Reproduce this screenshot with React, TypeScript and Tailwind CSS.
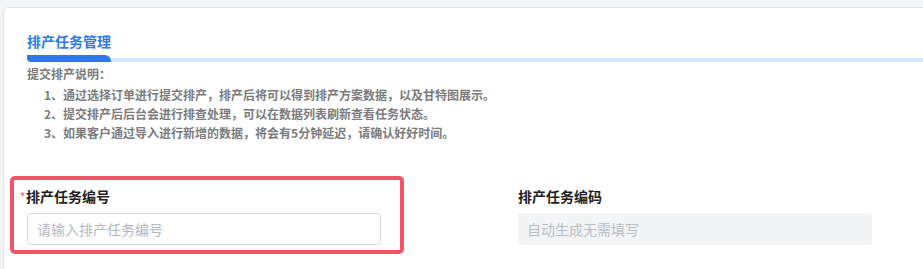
import React from "react";

const notes = [
  "1、通过选择订单进行提交排产，排产后将可以得到排产方案数据，以及甘特图展示。",
  "2、提交排产后后台会进行排查处理，可以在数据列表刷新查看任务状态。",
  "3、如果客户通过导入进行新增的数据，将会有5分钟延迟，请确认好好时间。",
];

const App: React.FC = () => {
  return (
    <div
      className="h-[269px] w-[923px] overflow-hidden bg-[#f3f4f6] pl-[3px] pt-[7px]"
      style={{ fontFamily: '"Noto Sans CJK SC", "Noto Sans", sans-serif' }}
    >
      <div className="h-[300px] w-[940px] rounded-tl-[5px] border border-[#e4e6ea] bg-white pt-[23px]">
        {/* header */}
        <div className="pl-[23px]">
          <div className="text-[14px] font-bold leading-[20px] text-[#2f7ae8]">排产任务管理</div>
          <div className="mt-[4px] flex items-end">
            <div className="h-[7px] w-[84px] rounded-bl-[4px] rounded-tr-[6px] bg-[#2f7ae8]" />
            <div className="h-[4px] flex-1 bg-[#d6e5fa]" />
          </div>
        </div>

        {/* description */}
        <div className="pl-[23px] pt-[4px] text-[12px] font-bold text-[#7b7b7b]">
          <div className="leading-[16px]">提交排产说明：</div>
          <div className="mt-[3px] pl-[17px]">
            {notes.map((n, i) => (
              <div key={i} className="leading-[19px]">
                {n}
              </div>
            ))}
          </div>
        </div>

        {/* form */}
        <div className="mt-[34px] flex items-start pl-[6px]">
          <div className="h-[78px] w-[394px] rounded-[5px] border-[4px] border-[#f25466] pl-[13px] pt-[7px]">
            <div className="-ml-[7px] flex items-center text-[14px] font-bold leading-[18px] text-[#1f1f1f]">
              <span className="mr-[1px] text-[10px] text-[#f07a7a]">*</span>
              排产任务编号
            </div>
            <div className="mt-[8px] flex h-[32px] w-[354px] items-center rounded-[4px] border border-[#d9dbe0] pl-[9px] text-[14px] text-[#b6b8bd]">
              请输入排产任务编号
            </div>
          </div>
          <div className="ml-[114px] pt-[11px]">
            <div className="text-[14px] font-bold leading-[18px] text-[#1f1f1f]">排产任务编码</div>
            <div className="mt-[8px] flex h-[32px] w-[354px] items-center rounded-[3px] bg-[#f3f4f6] pl-[9px] text-[14px] text-[#b9bcc1]">
              自动生成无需填写
            </div>
          </div>
        </div>
      </div>
    </div>
  );
};

export default App;
